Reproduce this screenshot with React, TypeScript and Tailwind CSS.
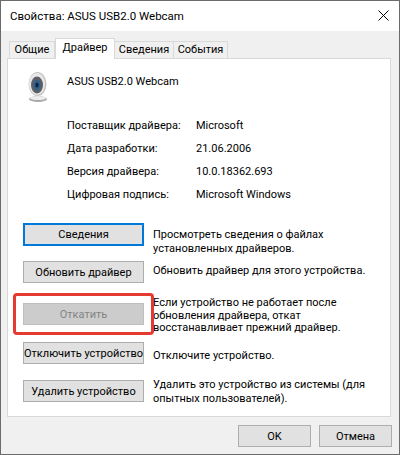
const infoRows = [
  ["Поставщик драйвера:", "Microsoft"],
  ["Дата разработки:", "21.06.2006"],
  ["Версия драйвера:", "10.0.18362.693"],
  ["Цифровая подпись:", "Microsoft Windows"],
];

function DriverButton({ label, focused, disabled }: { label: string; focused?: boolean; disabled?: boolean }) {
  return (
    <div
      className={
        focused
          ? "flex h-[23px] w-[121px] shrink-0 items-center justify-center border-2 border-[#0078d7] bg-[#e1e1e1] pt-px text-black"
          : disabled
            ? "flex h-[22px] w-[121px] shrink-0 items-center justify-center border border-[#bfbfbf] bg-[#cccccc] pt-px text-[#838383]"
            : "flex h-[22px] w-[121px] shrink-0 items-center justify-center border border-[#adadad] bg-[#e1e1e1] pt-px text-black"
      }
    >
      {label}
    </div>
  );
}

function WebcamIcon() {
  return (
    <svg width="32" height="32" viewBox="0 0 32 32" className="-ml-px shrink-0">
      <ellipse cx="16" cy="28" rx="9" ry="3" fill="#a8a8a8" />
      <ellipse cx="16" cy="27" rx="8" ry="2" fill="#ececec" />
      <ellipse cx="15.5" cy="13" rx="9" ry="12" fill="#c4c4c4" />
      <ellipse cx="15" cy="13" rx="8" ry="11" fill="#e8e8e8" />
      <ellipse cx="15" cy="14" rx="6" ry="8.5" fill="#5c6066" />
      <ellipse cx="15" cy="14" rx="3.5" ry="5" fill="#2d5f8c" />
      <ellipse cx="15" cy="14" rx="1.5" ry="2.5" fill="#0d2238" />
    </svg>
  );
}

export default function App() {
  return (
    <div className="flex h-[455px] w-[400px] flex-col whitespace-nowrap border border-[#6b6b6b] bg-[#f0f0f0] font-['Roboto',sans-serif] text-[11px] leading-[14px] text-black">
      <div className="flex h-[30px] shrink-0 items-center justify-between bg-white pl-[9px] pr-[10px] text-[11.5px]">
        <span>Свойства: ASUS USB2.0 Webcam</span>
        <svg width="11" height="11" viewBox="0 0 11 11" className="mb-[2px]">
          <path d="M0.5 0.5L10.5 10.5M10.5 0.5L0.5 10.5" stroke="#000" strokeWidth="1" fill="none" />
        </svg>
      </div>
      <div className="flex flex-1 flex-col pl-[6px] pr-[8px] pt-[7px]">
        <div className="flex h-[20px] items-end pl-[2px]">
          <div className="flex h-[17px] w-[46px] items-center justify-center border border-b-0 border-[#d9d9d9] bg-[#f0f0f0]">Общие</div>
          <div className="relative z-10 -mb-px flex h-[21px] w-[60px] items-center justify-center border border-b-0 border-[#d9d9d9] bg-white pb-[2px]">Драйвер</div>
          <div className="flex h-[17px] w-[59px] items-center justify-center border border-l-0 border-b-0 border-[#d9d9d9] bg-[#f0f0f0]">Сведения</div>
          <div className="flex h-[17px] w-[54px] items-center justify-center border border-l-0 border-b-0 border-[#d9d9d9] bg-[#f0f0f0]">События</div>
        </div>
        <div className="flex h-[359px] flex-col border border-[#d9d9d9] bg-white pl-[15px] pr-[10px]">
          <div className="mt-[12px] flex items-start gap-[13px]">
            <WebcamIcon />
            <span className="mt-[4px]">ASUS USB2.0 Webcam</span>
          </div>
          <div className="mt-[16px] flex flex-col gap-[9px] pl-[44px]">
            {infoRows.map(([name, value]) => (
              <div key={name} className="flex">
                <span className="w-[129px]">{name}</span>
                <span>{value}</span>
              </div>
            ))}
          </div>
          <div className="mt-[21px] flex h-[23px] gap-[9px]">
            <DriverButton label="Сведения" focused />
            <p className="mt-[5px]">Просмотреть сведения о файлах<br />установленных драйверов.</p>
          </div>
          <div className="mt-[15px] flex h-[22px] gap-[9px]">
            <DriverButton label="Обновить драйвер" />
            <p className="mt-[3px]">Обновить драйвер для этого устройства.</p>
          </div>
          <div className="mt-[20px] flex h-[22px] gap-[9px]">
            <div className="relative">
              <DriverButton label="Откатить" disabled />
              <div className="absolute -inset-x-[10px] -inset-y-[10px] rounded-[4px] border-[3px] border-[#e53a2f]" />
            </div>
            <p className="-mt-[6px] leading-[12.5px]">Если устройство не работает после<br />обновления драйвера, откат<br />восстанавливает прежний драйвер.</p>
          </div>
          <div className="mt-[17px] flex h-[22px] gap-[9px]">
            <DriverButton label="Отключить устройство" />
            <p className="mt-[7px]">Отключите устройство.</p>
          </div>
          <div className="mt-[16px] flex h-[22px] gap-[9px]">
            <DriverButton label="Удалить устройство" />
            <p className="-mt-[2px]">Удалить это устройство из системы (для<br />опытных пользователей).</p>
          </div>
        </div>
        <div className="-mr-px mt-[8px] flex justify-end gap-[8px]">
          <div className="flex h-[22px] w-[73px] items-center justify-center border border-[#adadad] bg-[#e1e1e1] pt-px">OK</div>
          <div className="flex h-[22px] w-[73px] items-center justify-center border border-[#adadad] bg-[#e1e1e1] pt-px">Отмена</div>
        </div>
      </div>
    </div>
  );
}
